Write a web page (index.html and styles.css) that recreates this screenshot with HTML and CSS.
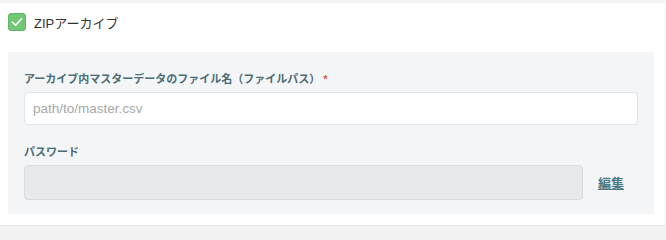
FILE: index.html
```html
<!DOCTYPE html>
<html lang="ja">
<head>
<meta charset="utf-8">
<link rel="stylesheet" href="styles.css">
</head>
<body>
<div class="card">
  <label class="check-row">
    <span class="checkbox">
      <svg width="12" height="10" viewBox="0 0 12 10"><path d="M1.5 5.2 L4.6 8.2 L10.5 1.8" fill="none" stroke="#fff" stroke-width="1.6" stroke-linecap="round" stroke-linejoin="round"/></svg>
    </span>
    <span class="check-text">ZIPアーカイブ</span>
  </label>
  <div class="panel">
    <div class="field">
      <div class="label">アーカイブ内マスターデータのファイル名（ファイルパス）<span class="req">*</span></div>
      <div class="input"><span class="placeholder">path/to/master.csv</span></div>
    </div>
    <div class="field field-2">
      <div class="label">パスワード</div>
      <div class="row">
        <div class="input disabled"></div>
        <a class="edit" href="#">編集</a>
      </div>
    </div>
  </div>
</div>
</body>
</html>
```
FILE: styles.css
```css
html, body {
  margin: 0;
  padding: 0;
  background: #f2f2f2;
  font-family: "Liberation Sans", "Noto Sans CJK JP", sans-serif;
}
.card {
  margin-top: 3px;
  width: 665px;
  height: 223px;
  box-sizing: border-box;
  background: #fff;
  padding: 9px 11px 0 8px;
  border-bottom: 1px solid #e8e8e8;
}
.check-row {
  display: flex;
  align-items: center;
  height: 20px;
  gap: 8px;
}
.checkbox {
  width: 18px;
  height: 18px;
  box-sizing: border-box;
  border-radius: 3px;
  background: #72c777;
  border: 1px solid #62b867;
  display: flex;
  align-items: center;
  justify-content: center;
}
.check-text {
  font-size: 13px;
  color: #333;
}
.panel {
  margin-top: 20px;
  background: #f4f5f7;
  padding: 18px 16px 14px 16px;
}
.label {
  font-size: 11px;
  line-height: 18px;
  font-weight: bold;
  color: #4b6b76;
  margin-bottom: 4px;
}
.req {
  color: #e0524f;
  margin-left: 3px;
}
.input {
  height: 33px;
  box-sizing: border-box;
  background: #fff;
  border: 1px solid #dfe5e8;
  border-radius: 4px;
  display: flex;
  align-items: center;
  padding-left: 8px;
}
.placeholder {
  font-size: 13.5px;
  color: #a8a8a8;
}
.field-2 {
  margin-top: 18px;
}
.row {
  display: flex;
  align-items: center;
}
.input.disabled {
  flex: 0 0 559px;
  height: 35px;
  background: #e8e9eb;
  border-color: #d9dddf;
}
.edit {
  margin-left: 15px;
  font-size: 13px;
  font-weight: bold;
  color: #4d7886;
  text-decoration: underline;
}
```
